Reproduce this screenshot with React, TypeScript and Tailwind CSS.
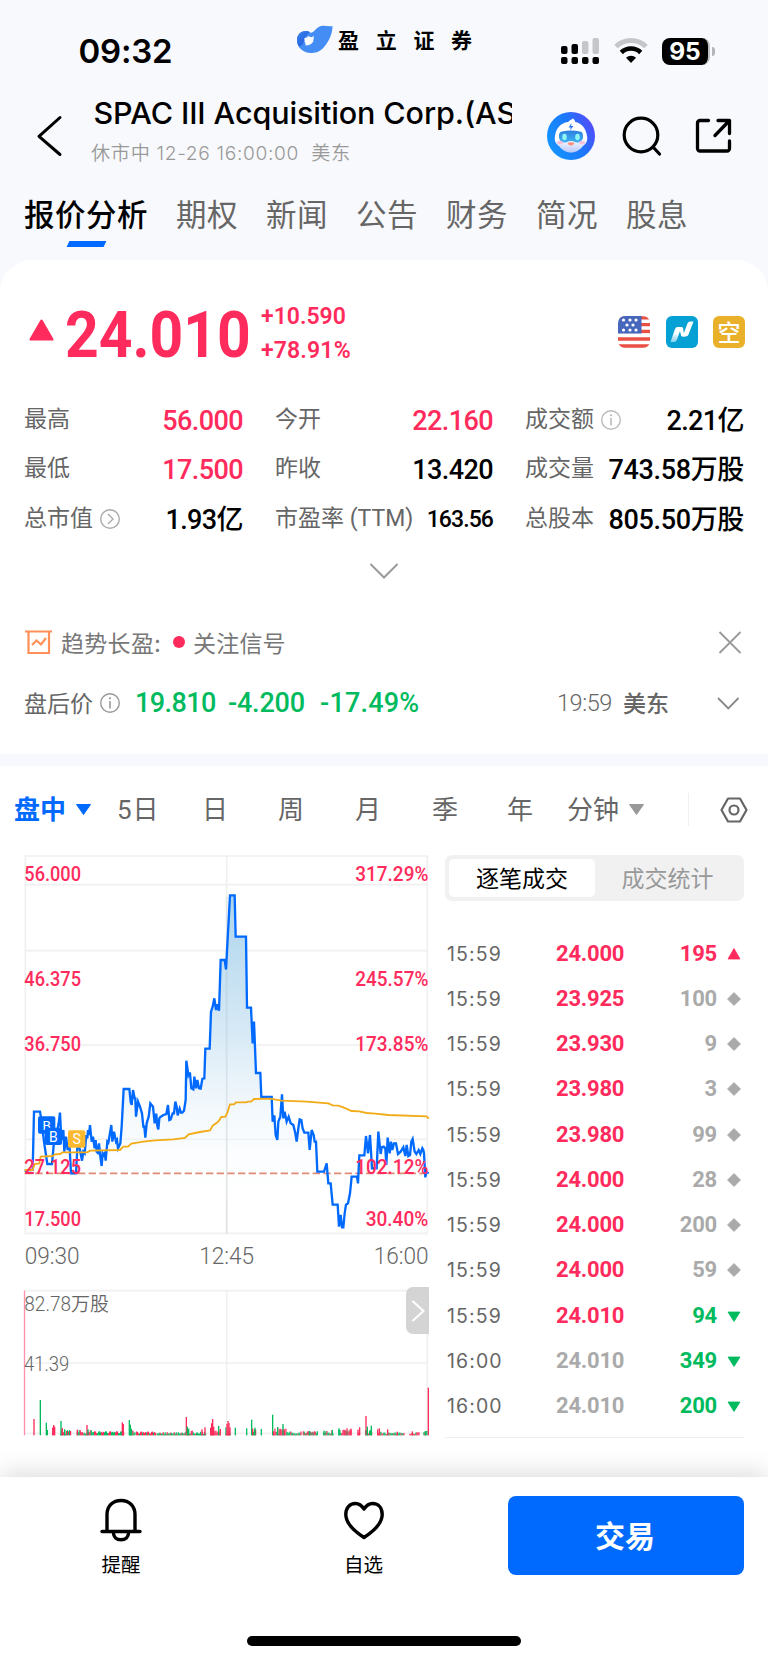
import React from "react";

const DIN = "font-[Roboto,'Noto_Sans_CJK_SC',sans-serif]";

function StatusBar() {
  return (
    <div className="flex h-[90px] shrink-0 pl-[78.500px] pr-[53px]">
      <div className="mt-[34px] w-[217.500px] font-[Inter,sans-serif] text-[33px] leading-[34px] font-semibold tracking-[-0.200px]">09:32</div>
      <svg className="mt-[24px] h-[30px] w-[38px]" viewBox="0 0 38 30">
        <defs>
          <linearGradient id="lg" x1="0" y1="0" x2="1" y2="1">
            <stop offset="0" stopColor="#3b86f0" />
            <stop offset="1" stopColor="#1b4fd6" />
          </linearGradient>
        </defs>
        <path d="M1 16C1 10.500 5 7 10 7c2.500 0 3.200 1.500 5 1.800C19 8.500 20 2 27 1.800c3.500-.1 6.500 1 9.500.2C36.500 11 32 18 28.500 22.500 25 27 20.500 29 15 29 7 29 1 23.500 1 16z" fill="#438df5" />
        <path d="M14 8.200C12.500 7.200 11 7 9.500 7 4.500 7 1 11 1 16c0 2.500.8 5 2 6.500 3-.5 4.500-3 5-6 .3-3.500 3-6.500 6-8.300z" fill="url(#lg)" />
        <path d="M8 14.500c1.500-1 2.800-.5 4.500-2.500 1.500 1.500 3.500 1.500 5.500 0-.5 2.500-.5 4-.8 5.500C16 20 13 21.500 9.500 21.500c.5-1.500-.5-2.500-.8-3.500-.2-1.300.3-2.300-.7-3.500z" fill="#f8f9fc" />
      </svg>
      <div className="mt-[29px] ml-[4px] w-[170px] font-['Noto_Sans_CJK_SC',sans-serif] text-[21px] leading-[20px] font-bold tracking-[16.700px]">盈立证券</div>
      <div className="mt-[37px] ml-auto flex h-[28px] items-center">
        <svg className="h-[28px] w-[40px]" viewBox="0 0 40 28">
          <g>
            <rect x="1" y="9" width="6.500" height="8" rx="2" />
            <rect x="11.500" y="7" width="6.500" height="10" rx="2" />
            <rect x="22" y="4" width="6.500" height="13" rx="2" fill="#c5c6c9" />
            <rect x="32.500" y="1" width="6.500" height="16" rx="2" fill="#c5c6c9" />
            <rect x="1" y="20" width="6.500" height="7" rx="2" />
            <rect x="11.500" y="20" width="6.500" height="7" rx="2" />
            <rect x="22" y="20" width="6.500" height="7" rx="2" />
            <rect x="32.500" y="20" width="6.500" height="7" rx="2" />
          </g>
        </svg>
        <svg className="ml-[14px] h-[28px] w-[34px]" viewBox="0 0 34 28" fill="none">
          <path d="M2 9.500a21.500 21.500 0 0 1 30 0" stroke="#c5c6c9" strokeWidth="5" />
          <path d="M7.300 15.500a13.800 13.800 0 0 1 19.400 0" stroke="#000" strokeWidth="4.600" />
          <path d="M17 26l-5-5.200a7.200 7.200 0 0 1 10 0z" fill="#000" />
        </svg>
        <div className="ml-[14px] flex h-[27px] w-[48px] items-center justify-center overflow-hidden rounded-[8px] border-r-[2px] border-[#bdbec1] bg-black font-[Inter,sans-serif] text-[24.500px] leading-none font-bold text-white">95</div>
        <div className="ml-[2px] h-[9px] w-[3px] rounded-r-full bg-[#b4b5b8]" />
      </div>
    </div>
  );
}

function Robot() {
  return (
    <svg className="h-[48px] w-[48px]" viewBox="0 0 48 48">
      <defs>
        <linearGradient id="rb" x1="0" y1="0.700" x2="1" y2="0.200">
          <stop offset="0" stopColor="#1496ff" />
          <stop offset="0.550" stopColor="#1c78fb" />
          <stop offset="1" stopColor="#5b46fa" />
        </linearGradient>
        <linearGradient id="rv" x1="0" y1="0" x2="0" y2="1">
          <stop offset="0" stopColor="#2b7fe0" />
          <stop offset="1" stopColor="#3fb2f3" />
        </linearGradient>
        <linearGradient id="rf" x1="0" y1="0" x2="0" y2="1">
          <stop offset="0.600" stopColor="#fff" />
          <stop offset="1" stopColor="#b9c8fb" />
        </linearGradient>
      </defs>
      <circle cx="24" cy="24" r="24" fill="url(#rb)" />
      <path d="M26 6.500c-1.500 1-3.500 2-5 3.500C13 11 9 17 8 24c-1 5 1 8 4 10 3 4 7 6.500 12 6.500S33 38 36 34c3-2 5-5 4-10-1-7-5-13-12-14 .5-1-.5-1.500-.5-2z" fill="url(#rf)" />
      <path d="M15 19.500q9-2 18 0c3 .5 3 3 3 5 0 4-3 6-6 6-2 0-3-1.500-6-1.500s-4 1.500-6 1.500c-3 0-6-2-6-6 0-2 0-4.500 3-5z" fill="url(#rv)" />
      <ellipse cx="17.500" cy="25" rx="2.300" ry="3.200" fill="#8ff5f2" />
      <ellipse cx="30.500" cy="25" rx="2.300" ry="3.200" fill="#8ff5f2" />
      <ellipse cx="13" cy="30.500" rx="3" ry="1.800" fill="#f7c1dc" />
      <ellipse cx="35" cy="30.500" rx="3" ry="1.800" fill="#f7c1dc" />
      <path d="M20.500 31q3.500-1.500 7 0-1 2.500-3.500 2.500T20.500 31z" fill="#ff8d7c" />
      <path d="M24.500 11l-3 4.500h2.300l-.8 3 3.500-4.500h-2.300z" fill="#2e7bf5" />
    </svg>
  );
}

function Header() {
  return (
    <div className="flex h-[90px] shrink-0">
      <svg className="mt-[24px] ml-[34px] h-[44px] w-[30px]" viewBox="0 0 30 44" fill="none" stroke="#000" strokeWidth="3" strokeLinecap="round" strokeLinejoin="round">
        <path d="M26 3.500L5 22.300 26 40.500" />
      </svg>
      <div className="ml-[27px] flex w-[421px] flex-col overflow-hidden">
        <div className="mt-[2.500px] ml-[2.500px] font-[Inter,sans-serif] text-[30.500px] leading-[40px] font-medium tracking-[-0.100px] whitespace-nowrap">SPAC III Acquisition Corp.(AS</div>
        <div className="mt-[8.500px] font-[Inter,'Noto_Sans_CJK_SC',sans-serif] text-[19.200px] leading-[24px] font-[350] tracking-[0.650px] whitespace-pre text-[#999]">休市中 12-26 16:00:00  美东</div>
      </div>
      <div className="mt-[22px] ml-[35px]"><Robot /></div>
      <svg className="mt-[24px] ml-[26px] h-[44px] w-[44px]" viewBox="0 0 44 44" fill="none" stroke="#000" strokeWidth="3.200" strokeLinecap="round">
        <circle cx="20" cy="21" r="16.800" />
        <path d="M32.500 33.500l6 6.500" />
      </svg>
      <svg className="mt-[27px] ml-[28.500px] h-[38px] w-[38px]" viewBox="0 0 38 38" fill="none" stroke="#000" strokeWidth="3.300" strokeLinecap="round" strokeLinejoin="round">
        <path d="M14.500 3.500H6a2.500 2.500 0 0 0-2.500 2.500V31.500a2.500 2.500 0 0 0 2.500 2.500h27a2.500 2.500 0 0 0 2.500-2.500V24M24 3.500h11.500v13M35 4L21 18.500" />
      </svg>
    </div>
  );
}

function MainTabs() {
  const tabs = ["期权", "新闻", "公告", "财务", "简况", "股息"];
  return (
    <div className="flex h-[80px] shrink-0 pl-[24px] font-['Noto_Sans_CJK_SC',sans-serif] text-[30.500px] leading-[44px] tracking-[0.500px]">
      <div className="mt-[10.500px] w-[152px] font-medium text-black">
        报价分析
        <div className="mt-[6px] ml-[44px] h-[6px] w-[37px] -skew-x-[25deg] bg-[#006aff]" />
      </div>
      {tabs.map((t) => (
        <div key={t} className="mt-[10.500px] w-[90px] text-[#666]">{t}</div>
      ))}
    </div>
  );
}

function Info({ color = "#999" }: { color?: string }) {
  return (
    <svg className="ml-[6px] h-[22px] w-[22px]" viewBox="0 0 22 22" fill="none" stroke={color} strokeWidth="1.400">
      <circle cx="11" cy="11" r="9.300" />
      <path d="M11 9V16.500" strokeWidth="1.600" />
      <circle cx="11" cy="6.300" r="1.100" fill={color} stroke="none" />
    </svg>
  );
}

function Stat({ label, icon, value, tone = "text-black", size = "text-[27px] tracking-[-0.600px]" }: { label: string; icon?: React.ReactNode; value: React.ReactNode; tone?: string; size?: string }) {
  return (
    <div className="flex h-[49.500px] items-center whitespace-nowrap">
      <span className="font-[Roboto,'Noto_Sans_CJK_SC',sans-serif] text-[23px] leading-[30px] text-[#666]">{label}</span>
      {icon}
      <span className={`${DIN} ml-auto mt-[2px] leading-[30px] font-medium ${size} ${tone}`}>{value}</span>
    </div>
  );
}

function Quote() {
  return (
    <div className="px-[24px]">
      <div className="flex h-[135px]">
        <svg className="mt-[57px] ml-[4px] h-[26px] w-[28px]" viewBox="0 0 28 26">
          <path d="M12.200 3.500L1.800 21.500q-1 2 1 2h21.400q2 0 1-2L14.800 3.500q-1.300-2-2.600 0z" fill="#ff2b5c" />
        </svg>
        <div className="mt-[42px] ml-[9px] w-[196px]">
          <div className="w-[210px] origin-left scale-x-[0.905] font-[Roboto,sans-serif] text-[65px] leading-[66px] font-bold text-[#ff2b5c]">24.010</div>
        </div>
        <div className="mt-[39.500px] font-[Roboto,sans-serif] text-[23px] leading-[34.500px] font-semibold text-[#ff2b5c]">
          <div>+10.590</div>
          <div className="tracking-[0.150px]">+78.91%</div>
        </div>
        <div className="mt-[56px] -mr-px ml-auto flex gap-[15.500px]">
          <svg className="h-[32px] w-[32px] rounded-[7px]" viewBox="0 0 32 32">
            <rect width="32" height="32" fill="#fff" />
            <path d="M0 1.800h32M0 8.600h32M0 15.500h32M0 23h32M0 30h32" stroke="#ea4f43" strokeWidth="3.300" />
            <rect y="17.500" width="32" height="3.500" fill="#fff" />
            <rect width="23.500" height="17.500" fill="#4767bd" />
            <g fill="#fff">
              <circle cx="5.500" cy="4" r="1.600" /><circle cx="12" cy="4" r="1.600" /><circle cx="18" cy="4" r="1.600" />
              <circle cx="9" cy="9" r="1.600" /><circle cx="15" cy="9" r="1.600" />
              <circle cx="5.500" cy="14" r="1.600" /><circle cx="12" cy="14" r="1.600" /><circle cx="18" cy="14" r="1.600" />
            </g>
          </svg>
          <svg className="h-[32px] w-[32px]" viewBox="0 0 32 32">
            <defs>
              <linearGradient id="nq" x1="0" y1="1" x2="0" y2="0">
                <stop offset="0" stopColor="#fff" stopOpacity="0.500" />
                <stop offset="0.600" stopColor="#fff" />
              </linearGradient>
            </defs>
            <rect width="32" height="32" rx="6" fill="#05a1d4" />
            <path d="M4.500 26L9 13q.8-2 2.500-2h4L10.800 24q-.8 2-2.600 2z" fill="url(#nq)" />
            <path d="M13 11h2.500q1.200 0 1.500 1.200L18.500 20.500h-2q-1.200 0-1.500-1.200z" fill="#fff" />
            <path d="M27.500 5.500L22.500 18.500q-.8 2-2.600 2h-3.400l5-13q.8-2 2.600-2z" fill="#fff" />
          </svg>
          <div className="flex h-[32px] w-[32px] items-center justify-center rounded-[6px] bg-[#e9b02a] font-['Noto_Sans_CJK_SC',sans-serif] text-[23px] leading-none font-medium text-white"><span className="-mt-[2px]">空</span></div>
        </div>
      </div>
      <div className="grid grid-cols-[219px_218px_219px] gap-x-[32px]">
        <Stat label="最高" value="56.000" tone="text-[#ff2b5c]" />
        <Stat label="今开" value="22.160" tone="text-[#ff2b5c]" />
        <Stat label="成交额" icon={<Info color="#bbb" />} value="2.21亿" />
        <Stat label="最低" value="17.500" tone="text-[#ff2b5c]" />
        <Stat label="昨收" value="13.420" />
        <Stat label="成交量" value="743.58万股" size="text-[27px] tracking-[-0.350px]" />
        <Stat
          label="总市值"
          icon={
            <svg className="ml-[6px] h-[22px] w-[22px]" viewBox="0 0 22 22" fill="none" stroke="#aaa" strokeWidth="1.400">
              <circle cx="11" cy="11" r="9.300" />
              <path d="M9 6l5 5-5 5" />
            </svg>
          }
          value="1.93亿"
        />
        <Stat label="市盈率 (TTM)" value="163.56" size="text-[23px] tracking-[-0.900px]" />
        <Stat label="总股本" value="805.50万股" size="text-[27px] tracking-[-0.350px]" />
      </div>
      <div className="flex h-[59px] justify-center pt-[17px]">
        <svg className="h-[20px] w-[32px]" viewBox="0 0 32 20" fill="none" stroke="#999" strokeWidth="2" strokeLinecap="round">
          <path d="M3 3.500l13 13 13-13" />
        </svg>
      </div>
    </div>
  );
}

function Signals() {
  return (
    <div className="shrink-0 px-[24px] font-['Noto_Sans_CJK_SC',sans-serif] text-[23px] leading-[30px]">
      <div className="flex h-[60px] items-center text-[#777]">
        <svg className="h-[28px] w-[30px]" viewBox="0 0 30 28" fill="none" stroke="#ff9057" strokeWidth="2.200">
          <path d="M1 3.500h27M4.500 3.500v21.500h20.500v-21.500M8 17l4.500-4.500 4.500 4 5-6.500" />
        </svg>
        <span className="ml-[7px] w-[104px] tracking-[0.300px]">趋势长盈:</span>
        <span className="mr-[8px] ml-[8px] h-[12px] w-[12px] rounded-full bg-[#ff2b5c]" />
        <span className="tracking-[0.200px]">关注信号</span>
        <svg className="ml-auto h-[26px] w-[28px]" viewBox="0 0 28 26" fill="none" stroke="#999" strokeWidth="1.800">
          <path d="M3.500 3l21 21M24.500 3l-21 21" />
        </svg>
      </div>
      <div className="flex h-[62px] items-center text-[#666]">
        <span className="-mt-[2px]">盘后价</span>
        <Info />
        <div className="mt-[1px] flex font-[Roboto,sans-serif] text-[27px] font-medium tracking-[-0.600px] text-[#00ba5e]">
          <span className="ml-[14px] w-[93px]">19.810</span>
          <span className="w-[92px] tracking-[-0.200px]">-4.200</span>
          <span className="w-[102px] tracking-[0.200px]">-17.49%</span>
        </div>
        <span className="ml-auto font-[Roboto,sans-serif] text-[23.500px] font-light tracking-[-0.400px]">19:59</span>
        <span className="-mt-[2px] ml-[11px] font-medium">美东</span>
        <svg className="mr-[3px] ml-[46px] h-[18px] w-[26px]" viewBox="0 0 26 18" fill="none" stroke="#888" strokeWidth="1.800">
          <path d="M3 4l10.300 10.500L23.500 4" />
        </svg>
      </div>
    </div>
  );
}

function PeriodTabs() {
  return (
    <div className="flex h-[88px] shrink-0 items-center pl-[14px] font-[Roboto,'Noto_Sans_CJK_SC',sans-serif] text-[26px] leading-[36px] text-[#666]">
      <span className="w-[53px] font-bold text-[#006aff]">盘中</span>
      <svg className="ml-[9px] h-[11px] w-[15px]" viewBox="0 0 15 11"><path d="M.5.5h14L7.500 10.500z" fill="#006aff" stroke="#006aff" strokeLinejoin="round" /></svg>
      <span className="ml-[26px] w-[85px] tracking-[0.800px]">5日</span>
      <span className="w-[76px]">日</span>
      <span className="w-[77px]">周</span>
      <span className="w-[77px]">月</span>
      <span className="w-[75px]">季</span>
      <span className="w-[60px]">年</span>
      <span>分钟</span>
      <svg className="ml-[10px] h-[11px] w-[15px]" viewBox="0 0 15 11"><path d="M.5.5h14L7.500 10.500z" fill="#999" stroke="#999" strokeLinejoin="round" /></svg>
      <div className="ml-auto h-[33px] w-px bg-[#f0f0f0]" />
      <svg className="mr-[19px] ml-[30px] h-[28px] w-[30px]" viewBox="0 0 30 28" fill="none" stroke="#666" strokeWidth="2.200" strokeLinejoin="round">
        <path d="M9 2.500h12L27.500 14 21 25.500H9L2.500 14z" />
        <circle cx="15" cy="14" r="4.500" />
      </svg>
    </div>
  );
}

const PRICE =
  "74,992 98,990 102,815 120,815 124,840 132,905 142,972 156,972 162,905 170,880 176,850 180,818 184,900 190,870 193,935 198,890 203,930 208,905 213,1000 228,1000 233,905 240,930 246,962 250,935 254,940 259,885 262,895 264,870 267,885 270,855 275,905 279,890 284,925 287,900 290,935 293,938 297,910 301,950 305,978 308,940 311,945 314,940 317,962 322,905 325,908 329,885 334,855 337,905 342,875 348,905 351,900 354,925 361,910 365,860 371,747 388,747 392,785 395,795 399,750 404,775 406,775 408,830 414,785 420,800 426,820 430,860 433,860 436,893 440,850 446,830 451,790 459,800 464,850 466,824 469,824 472,858 475,868 478,835 480,832 490,825 499,822 504,795 508,840 512,838 518,820 522,820 526,785 530,800 533,826 539,806 543,818 547,818 552,812 557,780 559,662 565,705 567,700 570,700 574,745 580,748 583,710 588,745 592,720 597,745 602,746 607,717 613,715 616,626 629,626 633,515 638,500 643,475 648,510 652,493 657,512 662,360 674,360 678,388 690,166 704,166 707,290 738,290 741,503 753,503 758,610 762,545 768,699 781,699 784,771 815,771 818,845 823,826 827,885 832,900 835,845 841,830 846,763 850,835 854,815 860,845 866,830 872,850 880,855 885,875 890,905 895,865 899,838 904,840 908,865 913,878 925,878 929,930 935,870 941,885 944,905 948,905 952,995 972,995 980,970 985,1030 992,1030 998,1094 1013,1094 1017,1160 1022,1125 1026,1162 1030,1162 1034,1120 1038,1094 1044,1090 1050,1060 1055,1010 1071,1010 1074,1030 1078,946 1093,946 1098,888 1104,940 1110,885 1116,985 1130,985 1135,875 1142,942 1145,922 1151,920 1156,925 1159,975 1163,893 1169,940 1173,905 1177,930 1182,910 1188,910 1194,942 1202,935 1210,922 1216,948 1220,915 1225,948 1230,945 1234,905 1238,897 1244,935 1249,942 1256,930 1261,942 1267,925 1270,930 1272,940 1276,1012 1279,995 1286,1000";

const AVERAGE =
  "74,990 98,990 104,972 118,970 122,950 158,948 165,943 180,942 188,937 262,937 270,932 360,930 370,920 384,920 394,911 430,905 465,901 520,898 555,894 566,883 600,876 630,871 638,857 655,845 664,831 676,830 682,818 690,793 702,793 708,787 738,787 744,785 753,785 762,777 810,776 845,782 920,785 985,790 998,796 1015,797 1030,802 1055,813 1078,814 1100,819 1125,821 1165,825 1280,829 1286,836";

const CHART_LABELS: [string, string, number][] = [
  ["56.000", "317.29%", 123],
  ["46.375", "245.57%", 438],
  ["36.750", "173.85%", 633],
  ["27.125", "102.12%", 1003],
  ["17.500", "30.40%", 1159],
];

function PriceChart() {
  return (
    <svg className="h-[430px] w-[432px]" viewBox="0 0 1296 1290" fontFamily="Roboto, sans-serif">
      <defs>
        <linearGradient id="area" gradientUnits="userSpaceOnUse" x1="0" y1="160" x2="0" y2="1110">
          <stop offset="0" stopColor="#acd4ec" />
          <stop offset="0.450" stopColor="#d8eaf6" />
          <stop offset="1" stopColor="#ffffff" stopOpacity="0" />
        </linearGradient>
      </defs>
      <path d="M74 48H1284M74 134H1284M74 332H1284M74 615H1284M74 898H1284M74 1180H1284M76 46V1180M680 46V1180M1282 46V1180" stroke="#f0f0f1" strokeWidth="5" fill="none" />
      <polygon points={`${PRICE} 1286,1178 74,1178`} fill="url(#area)" />
      <path d="M680 170V1180" stroke="#8899aa" strokeOpacity="0.150" strokeWidth="5" />
      <path d="M74 1000H1284" stroke="#e08c74" strokeWidth="5" strokeDasharray="22 10" />
      <polyline points={PRICE} fill="none" stroke="#006aff" strokeWidth="7" strokeLinejoin="miter" strokeMiterlimit="4" />
      <polyline points={AVERAGE} fill="none" stroke="#f2ab17" strokeWidth="5.500" />
      <g fontSize="46" fill="#fff" textAnchor="middle">
        <rect x="114" y="829" width="52" height="52" rx="6" fill="#006aff" />
        <text x="140" y="869" fontSize="40">B</text>
        <rect x="134" y="863" width="52" height="52" rx="6" fill="#006aff" />
        <text x="160" y="905" fontSize="42">B</text>
        <rect x="204" y="871" width="52" height="52" rx="6" fill="#fcb92f" />
        <text x="230" y="913" fontSize="42">S</text>
      </g>
      <g fontSize="58" fill="#ff2b5c" fontWeight="500">
        {CHART_LABELS.map(([left, right, y]) => (
          <React.Fragment key={left}>
            <text x="73" y={y} textLength="170" lengthAdjust="spacingAndGlyphs">{left}</text>
            <text x="1285" y={y} textAnchor="end" textLength={right.length === 7 ? 219 : 188} lengthAdjust="spacingAndGlyphs">{right}</text>
          </React.Fragment>
        ))}
      </g>
      <g fontSize="69" fill="#666" fontWeight="350">
        <text x="74" y="1271" textLength="165" lengthAdjust="spacingAndGlyphs">09:30</text>
        <text x="680" y="1271" textAnchor="middle" textLength="165" lengthAdjust="spacingAndGlyphs">12:45</text>
        <text x="1286" y="1271" textAnchor="end" textLength="165" lengthAdjust="spacingAndGlyphs">16:00</text>
      </g>
    </svg>
  );
}

const RED = "#ff2b5c";
const GREEN = "#00ba5e";

const SPIKES: [number, number, string][] = [
  [102, 447, RED], [121, 390, GREEN], [139, 458, GREEN], [142, 480, GREEN], [158, 473, RED], [161, 465, RED], [164, 470, RED],
  [183, 453, GREEN], [187, 474, RED], [194, 478, GREEN], [232, 479, RED], [261, 465, RED], [264, 478, GREEN], [367, 457, RED], [370, 462, RED],
  [388, 450, GREEN], [391, 464, GREEN], [394, 476, GREEN], [559, 441, RED], [562, 470, GREEN], [566, 476, GREEN], [606, 478, RED], [615, 472, RED], [632, 473, RED], [635, 460, RED],
  [638, 447, RED], [641, 470, RED], [656, 468, GREEN], [661, 477, RED], [678, 472, GREEN], [681, 462, RED], [684, 453, RED], [687, 459, RED], [690, 472, RED],
  [706, 473, GREEN], [740, 475, GREEN], [755, 449, GREEN], [758, 476, RED], [765, 473, GREEN], [784, 477, GREEN], [818, 434, GREEN],
  [821, 484, RED], [833, 471, GREEN], [840, 476, RED], [849, 462, GREEN], [853, 478, RED], [929, 483, GREEN], [952, 484, GREEN], [972, 482, GREEN], [997, 480, GREEN],
  [1017, 475, GREEN], [1035, 480, RED], [1041, 475, RED], [1053, 476, RED], [1074, 479, RED], [1079, 472, RED], [1098, 438, RED], [1102, 470, GREEN], [1114, 467, GREEN],
  [1133, 478, RED], [1138, 475, RED], [1163, 478, RED], [1192, 485, RED], [1237, 484, RED], [1276, 483, GREEN],
];

const CLUSTERS: [number, number, number][] = [
  [180, 213, 14], [230, 282, 14], [282, 372, 9], [388, 408, 14], [408, 468, 9], [470, 558, 6], [560, 582, 14], [582, 618, 8], [631, 662, 16],
  [677, 692, 22], [756, 768, 14], [820, 862, 18], [862, 905, 9], [908, 952, 9], [970, 1000, 12], [1015, 1056, 16], [1073, 1081, 13], [1095, 1117, 16],
  [1132, 1150, 12], [1150, 1215, 7], [1228, 1260, 6], [1270, 1284, 10],
];

function VolumeChart() {
  const small = CLUSTERS.flatMap(([from, to, max], c) =>
    Array.from({ length: Math.floor((to - from) / 3) }, (_, i) => {
      const n = (i * 7 + c * 5 + i * i * 3) % 11;
      return { x: from + i * 3, h: 4 + (max * n) / 11, color: (i * 5 + c * 3 + i * i) % 7 < 3 + (c % 2) ? GREEN : RED };
    })
  );
  return (
    <svg className="h-[170px] w-[432px]" viewBox="0 0 1296 510">
      <path d="M72 62H1284M72 279H1284M72 490H1284M680 62V496M1282 62V496" stroke="#f0f0f1" strokeWidth="5" fill="none" />
      <path d="M73.500 62V496" stroke="#ff8fab" strokeWidth="4" />
      {small.map((b) => (
        <rect key={b.x} x={b.x} y={496 - b.h} width="3.600" height={b.h} fill={b.color} />
      ))}
      {SPIKES.map(([x, y, color]) => (
        <rect key={x} x={x - 2} y={y} width="4" height={496 - y} fill={color} />
      ))}
      <rect x="1283" y="353" width="4" height="143" fill={RED} />
      <g fill="#666" fontFamily="Roboto, 'Noto Sans CJK SC', sans-serif" fontSize="59" fontWeight="350">
        <text x="73" y="123" textLength="254" lengthAdjust="spacingAndGlyphs">82.78万股</text>
        <text x="72" y="303" textLength="136" lengthAdjust="spacingAndGlyphs">41.39</text>
      </g>
    </svg>
  );
}

type Trade = [string, string, string, "up" | "flat" | "down", boolean];
const TRADES: Trade[] = [
  ["15:59", "24.000", "195", "up", true],
  ["15:59", "23.925", "100", "flat", true],
  ["15:59", "23.930", "9", "flat", true],
  ["15:59", "23.980", "3", "flat", true],
  ["15:59", "23.980", "99", "flat", true],
  ["15:59", "24.000", "28", "flat", true],
  ["15:59", "24.000", "200", "flat", true],
  ["15:59", "24.000", "59", "flat", true],
  ["15:59", "24.010", "94", "down", true],
  ["16:00", "24.010", "349", "down", false],
  ["16:00", "24.010", "200", "down", false],
];

const TONES = { up: "text-[#ff2b5c]", flat: "text-[#aaa]", down: "text-[#00ba5e]" };
const MARKS = {
  up: "M7 1.500L1 12h12z",
  flat: "M7 .5L13.500 7 7 13.500.5 7z",
  down: "M1 3h12L7 12.500z",
};

function Trades() {
  return (
    <div className="flex w-[299px] flex-col">
      <div className="mt-[15px] flex h-[46px] shrink-0 rounded-[7px] bg-[#f1f1f2] p-[4px] font-['Noto_Sans_CJK_SC',sans-serif] text-[23px] leading-[36px]">
        <div className="w-[146px] rounded-[5px] bg-white text-center text-black">逐笔成交</div>
        <div className="w-[145px] text-center text-[#999]">成交统计</div>
      </div>
      <div className="mt-[30.500px] flex flex-col border-b border-[#f0f0f0] pb-[8px]">
        {TRADES.map(([time, price, size, dir, hot], i) => (
          <div key={i} className="flex h-[45.250px] items-center pr-[3px] font-[Roboto,sans-serif] text-[22px] leading-[30px] font-bold tracking-[-0.200px]">
            <span className="w-[111px] pl-[2px] font-[Inter,sans-serif] text-[19.500px] font-normal tracking-[1.100px] text-[#666]">{time}</span>
            <span className={hot ? "text-[#ff2b5c]" : "text-[#aaa]"}>{price}</span>
            <span className={`ml-auto ${TONES[dir]}`}>{size}</span>
            <svg className={`ml-[10px] h-[14px] w-[14px] ${TONES[dir]}`} viewBox="0 0 14 14">
              <path d={MARKS[dir]} fill="currentColor" stroke="currentColor" strokeWidth="0.800" strokeLinejoin="round" />
            </svg>
          </div>
        ))}
      </div>
    </div>
  );
}

function BottomBar() {
  return (
    <div className="relative flex h-[187px] shrink-0 flex-col bg-white shadow-[0_-4px_24px_rgba(0,0,0,0.140)]">
      <div className="flex h-[110px] pt-[19px] font-['Noto_Sans_CJK_SC',sans-serif] text-[19.500px] leading-[28px]">
        <div className="flex w-[242px] flex-col items-center">
          <svg className="h-[48px] w-[46px]" viewBox="0 0 46 48" fill="none" stroke="#000" strokeWidth="3.400" strokeLinecap="round">
            <path d="M9 35V18.500C9 10 15 4.500 23 4.500S37 10 37 18.500V35M4 35.500h38" />
            <path d="M15.500 37c0 4 3 6.800 7.500 6.800s7.500-2.800 7.500-6.800" />
          </svg>
          <span className="mt-[6px]">提醒</span>
        </div>
        <div className="flex w-[243px] flex-col items-center">
          <svg className="h-[48px] w-[46px]" viewBox="0 0 46 48" fill="none" stroke="#000" strokeWidth="3.400" strokeLinejoin="round">
            <path d="M23 13C20 8.500 17.500 7.500 14.500 7.500 8.500 7.500 4.800 12 4.800 18.500 4.800 27.500 13 35 23 41.500 33 35 41.200 27.500 41.200 18.500 41.200 12 37.500 7.500 31.500 7.500 28.500 7.500 26 8.500 23 13z" />
          </svg>
          <span className="mt-[6px]">自选</span>
        </div>
        <div className="ml-[23px] flex h-[79px] w-[236px] items-center justify-center rounded-[8px] bg-[#006aff] pb-[3px] text-[30px] font-bold text-white"><span className="-ml-[2px]">交易</span></div>
      </div>
      <div className="mx-auto mt-[49px] h-[10px] w-[274px] rounded-full bg-black" />
    </div>
  );
}

export default function App() {
  return (
    <div className="flex h-[1663px] w-[768px] flex-col overflow-hidden bg-[#f8f9fc] text-black">
      <StatusBar />
      <Header />
      <MainTabs />
      <div className="flex grow flex-col rounded-t-[32px] bg-white">
        <Quote />
        <div className="h-[9px]" />
        <Signals />
        <div className="mt-[20px] h-[12px] shrink-0 bg-[#f7f8fb]" />
        <PeriodTabs />
        <div className="-mt-[14px] flex h-[637px] shrink-0">
          <div className="flex w-[445px] flex-col">
            <PriceChart />
            <div className="relative">
              <VolumeChart />
              <div className="absolute top-[17.500px] left-[406px] flex h-[47px] w-[23px] items-center justify-center rounded-l-[7px] bg-[#cfcfcf]/90">
                <svg className="h-[24px] w-[14px]" viewBox="0 0 14 24" fill="none" stroke="#fff" strokeWidth="2"><path d="M1.500 2l11 10-11 10" /></svg>
              </div>
            </div>
          </div>
          <Trades />
        </div>
        <BottomBar />
      </div>
    </div>
  );
}
